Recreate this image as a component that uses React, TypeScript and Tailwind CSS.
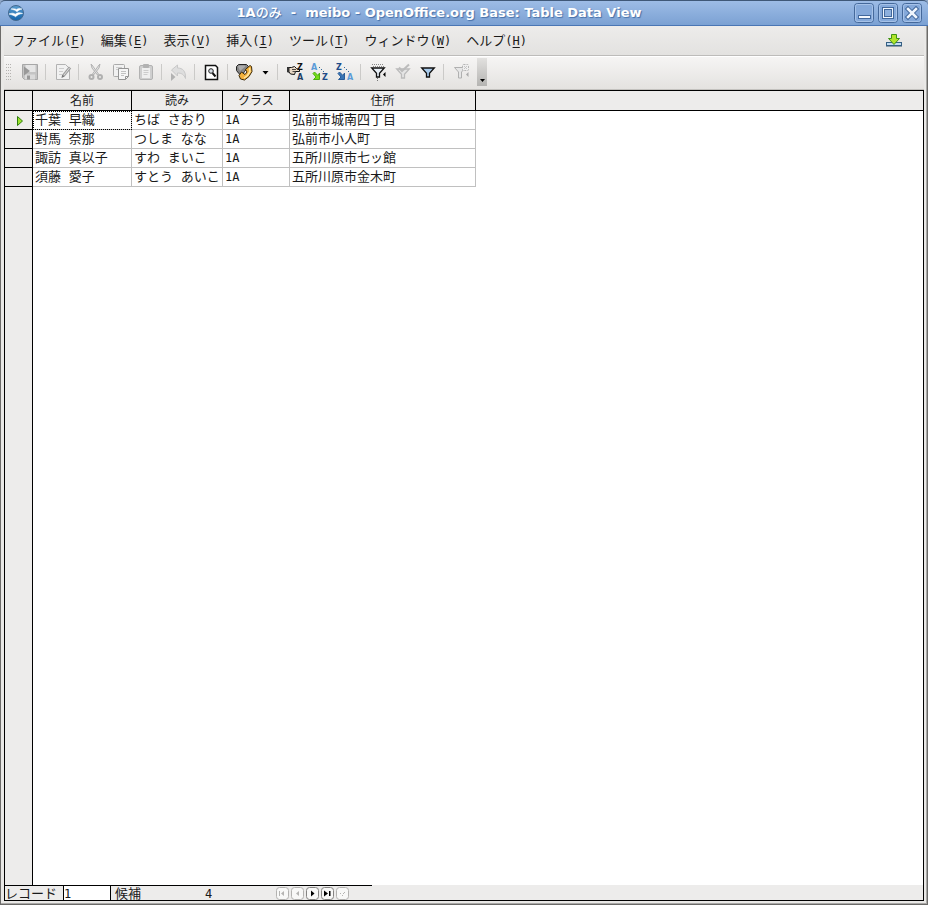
import type { ReactNode } from "react";

const MENUS = [
  { label: "ファイル", key: "F" },
  { label: "編集", key: "E" },
  { label: "表示", key: "V" },
  { label: "挿入", key: "I" },
  { label: "ツール", key: "T" },
  { label: "ウィンドウ", key: "W" },
  { label: "ヘルプ", key: "H" },
];

const ROWS = [
  { name: "千葉 早織", kana: "ちば さおり", group: "1A", address: "弘前市城南四丁目" },
  { name: "對馬 奈那", kana: "つしま なな", group: "1A", address: "弘前市小人町" },
  { name: "諏訪 真以子", kana: "すわ まいこ", group: "1A", address: "五所川原市七ッ館" },
  { name: "須藤 愛子", kana: "すとう あいこ", group: "1A", address: "五所川原市金木町" },
];

const Tool = ({ label, disabled, children }: { label: string; disabled?: boolean; children: ReactNode }) => (
  <button type="button" aria-label={label} disabled={disabled} className="h-5 w-[25px] shrink-0">
    <svg viewBox="0 0 25 20" className="block h-5 w-[25px]" fill="none">
      {children}
    </svg>
  </button>
);

const Separator = () => <div className="mr-1 ml-[3px] h-4 w-px shrink-0 bg-[#cbcac8]" />;

const Letter = ({ x, y, fill, children }: { x: number; y: number; fill: string; children: string }) => (
  <text x={x} y={y} fill={fill} fontSize="8" fontWeight="bold" fontFamily="DejaVu Sans, sans-serif">
    {children}
  </text>
);

const AppLogo = () => (
  <svg viewBox="0 0 16 16" className="h-4 w-4">
    <defs>
      <linearGradient id="logo" x1="0" y1="0" x2="0" y2="1">
        <stop offset="0" stopColor="#5d9fd0" />
        <stop offset="1" stopColor="#1263ab" />
      </linearGradient>
    </defs>
    <circle cx="8" cy="8" r="7.5" fill="url(#logo)" stroke="#44698f" />
    <path d="M3 4c2-.6 4-.4 5.500.4C10 3.300 12 3.200 14 4c-2 .4-3.500 1.200-5 2.800C7.500 5.300 5.500 4.600 3 4z" fill="#fff" stroke="#fff" strokeWidth=".5" />
    <path d="M1 9c2.500-1.200 5-1 6.200.2C9.200 7.500 12 7.300 14.500 8.500c-3 .2-4.800 1.300-7 3.200C6 10.500 4 9.700 1 9z" fill="#fff" stroke="#fff" strokeWidth=".6" />
  </svg>
);

const WindowButton = ({ label, children }: { label: string; children: ReactNode }) => (
  <button type="button" aria-label={label} className="h-5 w-5">
    <svg viewBox="0 0 20 20" className="block h-5 w-5" fill="none">
      <rect x=".5" y=".5" width="19" height="19" rx="3" fill="#85a9da" stroke="#45699b" />
      <rect x="1.5" y="1.5" width="17" height="17" rx="2" stroke="#a6c2e8" />
      {children}
    </svg>
  </button>
);

const TitleBar = () => (
  <header className="flex h-[26px] shrink-0 items-center rounded-t-[5px] border-t border-b border-t-[#3f5878] border-b-[#4a76b4] bg-linear-to-b from-[#9dbce6] to-[#7ba1d3] pr-1.5 pl-2">
    <AppLogo />
    <h1 className="flex-1 text-center font-['DejaVu_Sans','Noto_Sans_CJK_JP',sans-serif] text-[13px] leading-5 font-bold whitespace-pre text-white [text-shadow:1px_1px_1px_#4670a8]">
      1A<span className="font-medium">のみ</span>
      {"  -  meibo - OpenOffice.org Base: Table Data View"}
    </h1>
    <div className="flex w-[68px] gap-1">
      <WindowButton label="最小化">
        <rect x="4.5" y="12.5" width="12" height="3" fill="#f3f8fe" stroke="#42689c" />
      </WindowButton>
      <WindowButton label="最大化">
        <rect x="4.5" y="4.5" width="11" height="11" stroke="#42689c" />
        <rect x="5.5" y="5.5" width="9" height="9" stroke="#f0f6fd" />
        <rect x="6.5" y="6.5" width="7" height="7" fill="#8db0de" stroke="#42689c" />
      </WindowButton>
      <WindowButton label="閉じる">
        <path d="M6 6l8 8M14 6l-8 8" stroke="#42689c" strokeWidth="4.5" strokeLinecap="square" />
        <path d="M6 6l8 8M14 6l-8 8" stroke="#f0f6fd" strokeWidth="2.5" strokeLinecap="square" />
      </WindowButton>
    </div>
  </header>
);

const MenuBar = () => (
  <nav className="flex h-[30px] shrink-0 items-center border-b border-[#bdbcba] bg-linear-to-b from-[#edeceb] to-[#e3e2e0] pr-[22px] pb-0.5 pl-2">
    <div className="flex flex-1 gap-[15px]">
      {MENUS.map((menu) => (
        <button key={menu.key} type="button" className="text-[13px] leading-5 whitespace-nowrap">
          {menu.label}
          <span className="font-['DejaVu_Sans_Mono',monospace] text-xs">
            (<span className="underline underline-offset-2">{menu.key}</span>)
          </span>
        </button>
      ))}
    </div>
    <button type="button" aria-label="更新" className="h-4 w-4">
      <svg viewBox="0 0 16 16" className="block h-4 w-4">
        <rect x=".5" y="10.5" width="15" height="3" fill="#c3dcf2" stroke="#355f83" />
        <path d="M0 14.500h16" stroke="#8d9aa6" />
        <path d="M5.500 2.500h5v4h3L8 12.500 2.500 6.500h3z" fill="#b0e32a" stroke="#3f9312" />
      </svg>
    </button>
  </nav>
);

const Funnel = ({ stroke, fill, y = 5 }: { stroke: string; fill: string; y?: number }) => (
  <g transform={`translate(6 ${y})`}>
    <path d="M.7 1h12.600L8.500 6.200V10h-3V6.200z" fill={fill} stroke={stroke} strokeWidth="1.3" />
  </g>
);

const Toolbar = () => (
  <div className="flex h-[34px] shrink-0 items-center border-t border-b border-t-white border-b-[#c3c1be] bg-linear-to-b from-[#f6f5f4] to-[#e4e2e0] pb-0.5 pl-0.5">
    <svg viewBox="0 0 11 18" className="h-[18px] w-[11px]" stroke="#b5b3b0" strokeDasharray="1 2">
      <path d="M.5 1v17M2.500 1v17M4.500 1v17" />
    </svg>
    <Tool label="レコードの保存" disabled>
      <path d="M5.500 2.500h15v15h-13l-2-2z" fill="#c4c4c4" stroke="#a7a7a7" />
      <path d="M8.500 3h10v7h-10z" fill="#e6e6e6" />
      <path d="M8 12.500h10v5H8z" fill="#dadada" />
      <path d="M10 13.500h3v4h-3z" fill="#999" />
      <path d="M7 4.500l6 4.500-6 4.500z" fill="#999" />
    </Tool>
    <Separator />
    <Tool label="データの編集" disabled>
      <path d="M6.500 2.500h9l4 4v11h-13z" fill="#f1f1f1" stroke="#b2b2b2" />
      <path d="M9 6.500h5M9 9.500h4M9 12.500h3" stroke="#ccc" />
      <path d="M20 5.500L13.500 13.500" stroke="#a0a0a0" strokeWidth="3" />
      <path d="M19.500 6L14 13" stroke="#dedede" />
      <path d="M11.500 16l.7-3.500 2.500 2z" fill="#777" />
    </Tool>
    <Separator />
    <Tool label="切り取り" disabled>
      <path d="M8 2l1 4 5.500 7 1-1L9 3z" fill="#e4e4e4" stroke="#b2b2b2" />
      <path d="M17 2l-1 4-5.500 7-1-1L16 3z" fill="#e4e4e4" stroke="#b2b2b2" />
      <circle cx="8.500" cy="15" r="2" stroke="#b0b0b0" strokeWidth="2" />
      <circle cx="17" cy="15" r="2" stroke="#b0b0b0" strokeWidth="2" />
    </Tool>
    <Tool label="コピー" disabled>
      <rect x="5.5" y="2.5" width="11" height="12" rx="1" fill="#f1f1f1" stroke="#aaa" />
      <path d="M8 5.500h6M8 7.500h6" stroke="#ccc" />
      <path d="M10.500 6.500h10v8l-3 3h-7z" fill="#f6f6f6" stroke="#959595" />
      <path d="M13 9.500h5M13 11.500h5M13 13.500h3" stroke="#c2c2c2" />
      <path d="M17.500 17.500v-3h3" stroke="#959595" />
    </Tool>
    <Tool label="貼り付け" disabled>
      <rect x="6.5" y="3.5" width="13" height="14" rx="1.5" fill="#cfcfcf" stroke="#b2b2b2" />
      <path d="M9 6h8v10H9z" fill="#efefef" />
      <rect x="10" y="2" width="6" height="4" rx="1" fill="#b2b2b2" />
      <path d="M10.500 8.500h5M10.500 10.500h5M10.500 12.500h4" stroke="#ccc" />
    </Tool>
    <Separator />
    <Tool label="元に戻す" disabled>
      <path d="M5.500 8l6-5v3c5 0 8.500 3 8 10.500-1.500-4-4-5.500-8-5.500v3z" fill="#dedede" stroke="#c8c8c8" />
      <path d="M5 11l4.500 4L5 19z" fill="#b2b2b2" />
    </Tool>
    <Separator />
    <Tool label="レコードの検索">
      <path d="M6.500 3.500h10l2 2v12h-12z" fill="#fff" stroke="#111" strokeWidth="1.5" />
      <circle cx="12" cy="9" r="2.300" fill="#d5dde6" stroke="#222" />
      <path d="M13.500 11l3 3.500" stroke="#111" strokeWidth="2" />
    </Tool>
    <Separator />
    <Tool label="最新の情報に更新">
      <path d="M4.500 4.500l2-2h8l2 2-4 5-3 4.500-3-3-2-2.500z" fill="#858585" stroke="#222" />
      <path d="M6 4.500l1.500-1h5l1 1L8 9z" fill="#ababab" />
      <path d="M18 3.500l1.500 1 .5 5-3 5-4.500 3.500-4-1L7 13.500l2.500-3.500 3.500 2.500 2-2.500-1.500-2.500z" fill="#f3b13c" stroke="#3b2a0a" />
      <path d="M17.500 6l.5 3.500-2.500 4-3.500 2.500" stroke="#ffe5a0" strokeWidth="1.5" />
    </Tool>
    <button type="button" aria-label="更新オプション" className="h-5 w-[17px]">
      <svg viewBox="0 0 17 20" className="block h-5 w-[17px]">
        <path d="M5.500 9h6l-3 3.500z" fill="#000" />
      </svg>
    </button>
    <Separator />
    <Tool label="並べ替え">
      <path d="M5.500 5.500h4l3-1 2 2 3 1.500v1.500h-4l-1 3-4-.5-1.500-2h-1.500z" fill="#e8d8c6" stroke="#111" />
      <path d="M5 5h2.500v5H5z" fill="#333" />
      <path d="M10 7.500h4M10.500 9.500h3" stroke="#222" strokeWidth=".8" />
      <Letter x={15} y={8} fill="#111">Z</Letter>
      <Letter x={15} y={18} fill="#1f3f66">A</Letter>
    </Tool>
    <Tool label="昇順で並べ替え">
      <Letter x={4} y={8} fill="#5b9bd8">A</Letter>
      <Letter x={15} y={18} fill="#204a87">Z</Letter>
      <path d="M12 5.500h1M14 7.500h1M16 9.500h1" stroke="#356a9c" />
      <path d="M6 11.500l1.500-1.500 3.500 3.500 1.500-2.500v6.500H6.500L9 15z" fill="#76dd15" stroke="#4cae12" />
    </Tool>
    <Tool label="降順で並べ替え">
      <Letter x={4} y={8} fill="#204a87">Z</Letter>
      <Letter x={15} y={18} fill="#5b9bd8">A</Letter>
      <path d="M12 5.500h1M14 7.500h1M16 9.500h1" stroke="#356a9c" />
      <path d="M6 11.500l1.500-1.500 3.500 3.500 1.500-2.500v6.500H6.500L9 15z" fill="#3974b5" stroke="#2a5c98" />
    </Tool>
    <Separator />
    <Tool label="オートフィルター">
      <path d="M7 2.500h12M8 4.500h12" stroke="#888" strokeDasharray="1 1" />
      <Funnel stroke="#111" fill="#e7eef5" />
      <path d="M12.500 16v3" stroke="#777" strokeDasharray="1 1" />
      <path d="M20.500 10v5l-2.500-2.500z" fill="#000" />
    </Tool>
    <Tool label="フィルターの適用" disabled>
      <Funnel stroke="#bbb" fill="#e5e5e5" y={6} />
      <path d="M9 5.500l3 3.500 7-6.500" stroke="#bcbcbc" strokeWidth="2" />
    </Tool>
    <Tool label="標準フィルター">
      <Funnel stroke="#111" fill="#a9cbec" />
    </Tool>
    <Separator />
    <Tool label="フィルターの解除" disabled>
      <path d="M6.500 5.500h11l-4 4.500v6h-3v-6z" fill="#e6e6e6" stroke="#b0b0b0" />
      <rect x="14.5" y="2.5" width="6" height="6" rx="1" fill="#efefef" stroke="#b5b5b5" strokeDasharray="2 1" />
      <path d="M16 4l3 3M19 4l-3 3" stroke="#c5c5c5" />
      <path d="M20.500 10v5L18 12.500z" fill="#aaa" />
    </Tool>
    <button type="button" aria-label="ツールバーのオプション" className="ml-1 flex h-7 w-2.5 items-end justify-center bg-linear-to-b from-[#e2e1df] to-[#b5b4b2] pb-1">
      <svg viewBox="0 0 5 3" className="h-[3px] w-[5px]">
        <path d="M0 0h5L2.500 3z" />
      </svg>
    </button>
  </div>
);

const DataGrid = () => {
  const head = "border-r border-b border-black p-0 text-xs font-normal";
  const cell = "border-r border-b border-[#c0c0c0] bg-white p-0 pl-0.5";
  return (
    <div className="flex flex-1 flex-col bg-white">
      <table className="w-full table-fixed border-separate border-spacing-0 font-['DejaVu_Sans_Mono','Noto_Sans_CJK_JP',monospace] text-[13px] leading-[18px] whitespace-nowrap">
        <colgroup>
          <col className="w-7" />
          <col className="w-[99px]" />
          <col className="w-[91px]" />
          <col className="w-[67px]" />
          <col className="w-[186px]" />
          <col />
        </colgroup>
        <thead>
          <tr className="h-5 bg-[#edeceb]">
            <td className={head} />
            <th scope="col" className={head}>名前</th>
            <th scope="col" className={head}>読み</th>
            <th scope="col" className={head}>クラス</th>
            <th scope="col" className={head}>住所</th>
            <td className="border-b border-black p-0" />
          </tr>
        </thead>
        <tbody>
          {ROWS.map((row, i) => (
            <tr key={row.name} className="h-[19px]">
              <td className="border-r border-b border-black bg-[#edeceb] p-0">
                {i === 0 && (
                  <svg viewBox="0 0 8 10" className="mt-0.5 ml-[11px] h-2.5 w-2">
                    <path d="M1.500 .5l5 4.500-5 4.500z" fill="#9be22d" stroke="#2f7d0c" />
                  </svg>
                )}
              </td>
              <td className={i === 0 ? `${cell} outline-1 -outline-offset-1 outline-black outline-dotted` : cell}>{row.name}</td>
              <td className={cell}>{row.kana}</td>
              <td className={`${cell} text-xs leading-[18px]`}>{row.group}</td>
              <td className={cell}>{row.address}</td>
              <td className="p-0" />
            </tr>
          ))}
        </tbody>
      </table>
      <div className="w-7 flex-1 border-r border-black bg-[#edeceb]" />
    </div>
  );
};

const NavButton = ({ label, path, disabled }: { label: string; path: string; disabled?: boolean }) => (
  <button type="button" aria-label={label} disabled={disabled} className="h-[13px] w-[15px] text-black disabled:text-[#b5b4b2]">
    <svg viewBox="0 0 15 13" className="block h-[13px] w-[15px]">
      <rect x="1.5" y=".5" width="12" height="12" rx="3" fill="#f8f8f7" stroke={disabled ? "#b3b2b0" : "#858482"} />
      <path d={path} fill="currentColor" />
    </svg>
  </button>
);

const RecordBar = () => (
  <footer className="flex h-[15px] shrink-0 bg-[#edeceb] text-[13px] leading-[14px]">
    <div className="flex w-[367px] border-t border-black">
      <label htmlFor="record" className="w-[58px] whitespace-nowrap">
        レコード
      </label>
      <input id="record" defaultValue="1" className="h-[14px] w-12 border-x border-black bg-white pt-0.5 font-['DejaVu_Sans_Mono',monospace] text-xs leading-3" />
      <span className="w-[94px] pl-1">候補</span>
      <span className="w-[70px] pt-0.5 font-['DejaVu_Sans_Mono',monospace] text-xs leading-3">4</span>
      <div className="flex pt-px">
        <NavButton label="最初のレコード" disabled path="M4 4h1v5H4zM9 4v5L6 6.500z" />
        <NavButton label="前のレコード" disabled path="M9 4v5L6 6.500z" />
        <NavButton label="次のレコード" path="M6 3.500v6l3.500-3z" />
        <NavButton label="最後のレコード" path="M4 3.500v6l4-3zM9 4h1.500v5H9z" />
        <NavButton label="新規レコード" disabled path="M5 6h1v1H5zM7 8h1v1H7zM8 6h1v1H8zM9 5h1v1H9z" />
      </div>
    </div>
  </footer>
);

export default function App() {
  return (
    <div className="flex min-h-screen flex-col bg-[#8fa7c8] font-['Noto_Sans_CJK_JP',sans-serif] text-[#1a1a1a]">
      <TitleBar />
      <main className="flex flex-1 flex-col border-x border-b border-[#6c6b69] bg-[#e9e8e6]">
        <div className="flex flex-1 flex-col border-r border-b border-[#a9a8a6] pr-0.5 pb-0.5 pl-[3px]">
          <MenuBar />
          <Toolbar />
          <div className="flex flex-1 flex-col border border-black">
            <DataGrid />
            <RecordBar />
          </div>
        </div>
      </main>
    </div>
  );
}
